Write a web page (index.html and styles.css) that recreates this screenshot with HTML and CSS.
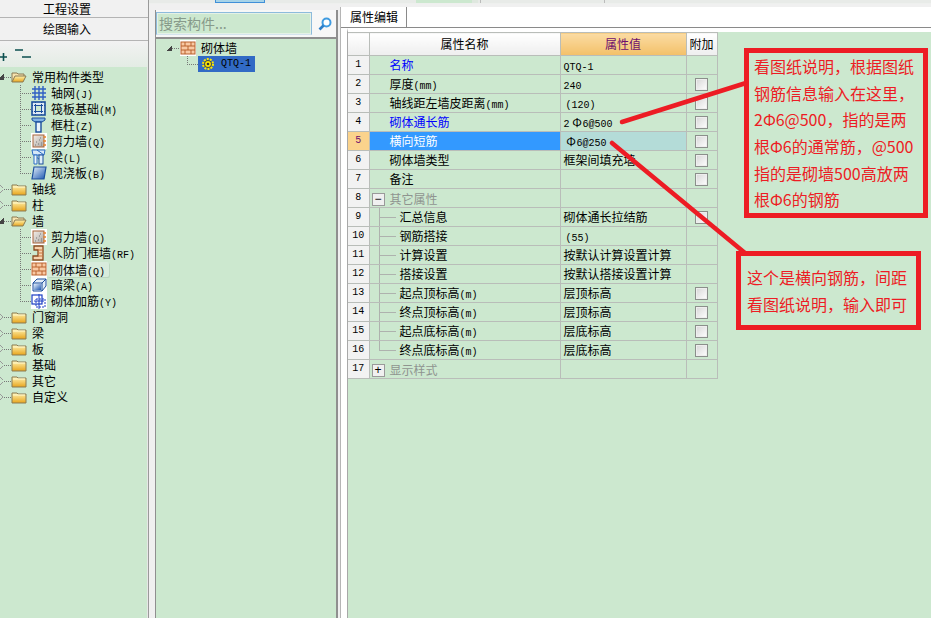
FILE: index.html
```html
<!DOCTYPE html>
<html lang="zh-CN">
<head>
    <meta charset="UTF-8">
    <title>砌体墙 属性编辑</title>
    <link rel="stylesheet" href="styles.css">
</head>
<body>
<svg class="defs" width="0" height="0">
    <defs>
        <linearGradient id="gFold" x1="0" y1="0" x2="0" y2="1"><stop offset="0" stop-color="#fff3b0"/><stop offset="1" stop-color="#e8a41c"/></linearGradient>
        <linearGradient id="gBlue" x1="0" y1="0" x2="1" y2="1"><stop offset="0" stop-color="#e4f0fb"/><stop offset="1" stop-color="#1d56b0"/></linearGradient>
        <linearGradient id="gWall" x1="0" y1="0" x2="1" y2="1"><stop offset="0" stop-color="#f6efe8"/><stop offset="1" stop-color="#a9a6a2"/></linearGradient>
        <symbol id="i-open" viewBox="0 0 16 16">
            <path d="M1 13V4h5l1 1h6v2" fill="#f7e3ae" stroke="#8a7a52"/>
            <path d="M1 13l3-6h11l-3 6z" fill="url(#gFold)" stroke="#8a7a52"/>
        </symbol>
        <symbol id="i-fold" viewBox="0 0 16 16">
            <path d="M1 14V4h5l1 1h8v9z" fill="url(#gFold)" stroke="#8a7a52"/>
            <path d="M2 6h12" stroke="#fff8d0"/>
        </symbol>
        <symbol id="i-grid" viewBox="0 0 16 16">
            <path d="M4 1v14M8 1v14M12 1v14M1 4h14M1 8h14M1 12h14" stroke="#2f5fc4" stroke-width="1.4" fill="none"/>
        </symbol>
        <symbol id="i-raft" viewBox="0 0 16 16">
            <rect x="1" y="1" width="13" height="13" fill="#dfeaf6" stroke="#1c4f9c" stroke-width="1.6"/>
            <rect x="4.500" y="4.500" width="6" height="6" fill="#cce8cf" stroke="#1c4f9c"/>
            <path d="M1 4.500h13M1 10.500h13M4.500 1v13M10.500 1v13" stroke="#1c4f9c" stroke-dasharray="1 1"/>
        </symbol>
        <symbol id="i-col" viewBox="0 0 16 16">
            <path d="M1 1h13v2l-3 2H4L1 3z" fill="#7fb2e4" stroke="#1c4f9c"/>
            <rect x="5" y="5" width="5" height="10" fill="#eaf3fb" stroke="#1c4f9c" stroke-width="1.400"/>
        </symbol>
        <symbol id="i-shear" viewBox="0 0 16 16">
            <rect width="16" height="16" fill="#fff"/>
            <rect x="2" y="2" width="11" height="12" fill="url(#gWall)" stroke="#a8643a"/>
            <path d="M5 9h1M8 7h1M7 11h1M10 10h1M4 12h1M10 12h1M9 5h1" stroke="#777"/>
            <path d="M14 3v2M14 7v2M14 11v2M12 4h3M12 8h3M12 12h3" stroke="#e8842a"/>
        </symbol>
        <symbol id="i-beam" viewBox="0 0 16 16">
            <path d="M1 1h13l-1 5H2z" fill="#d6e8f8" stroke="#2b6cc4"/>
            <path d="M3 6l6 5M6 1l7 5" stroke="#2b6cc4"/>
            <rect x="8" y="6" width="4" height="9" fill="#dfeefa" stroke="#1c4f9c"/>
            <path d="M3 6h3v9H3z" fill="#eef6fc" stroke="#2b6cc4"/>
        </symbol>
        <symbol id="i-slab" viewBox="0 0 16 16">
            <path d="M3 2h12l-2 12H1z" fill="url(#gBlue)" stroke="#1c4f9c" stroke-width="1.200"/>
        </symbol>
        <symbol id="i-door" viewBox="0 0 16 16">
            <rect width="16" height="16" fill="#cce8cf"/>
            <path d="M3 1h9v14H2v-4h5V5H3z" fill="#f6d3ae" stroke="#8a4a20" stroke-width="1.300"/>
            <path d="M7 5h5M7 8h5M7 11h5" stroke="#c9763c"/>
        </symbol>
        <symbol id="i-brick" viewBox="0 0 16 16">
            <rect width="16" height="16" fill="#fff"/>
            <rect x="1" y="2" width="14" height="12" fill="#f9c9a4" stroke="#b9622e"/>
            <path d="M1 6h14M1 10h14M5 2v4M11 2v4M8 6v4M5 10v4M11 10v4" stroke="#b9622e"/>
        </symbol>
        <symbol id="i-dark" viewBox="0 0 16 16">
            <rect width="16" height="16" fill="#fff"/>
            <path d="M2 6l4-4h9v7l-4 5H2z" fill="#e2edf8" stroke="#1c4f9c"/>
            <path d="M2 6h9v8M11 6l4-4" fill="none" stroke="#1c4f9c"/>
            <rect x="3" y="7" width="7" height="6" fill="url(#gBlue)"/>
        </symbol>
        <symbol id="i-rebar" viewBox="0 0 16 16">
            <rect width="16" height="16" fill="#fff"/>
            <rect x="1" y="2" width="10" height="9" fill="none" stroke="#1c3fc4" stroke-width="1.200"/>
            <rect x="5" y="6" width="9" height="8" fill="none" stroke="#1c3fc4" stroke-dasharray="2 1"/>
            <path d="M8 1v15M3 8h10" stroke="#1c3fc4"/>
        </symbol>
        <symbol id="i-gear" viewBox="0 0 12 12">
            <circle cx="6" cy="6" r="5" fill="none" stroke="#ffe800" stroke-width="2" stroke-dasharray="2 1.100"/>
            <circle cx="6" cy="6" r="3.500" fill="#ffe800" stroke="#222" stroke-width=".7"/>
            <circle cx="6" cy="6" r="1.300" fill="#333"/>
        </symbol>
    </defs>
</svg>

<div class="app">
    <aside class="left">
        <div class="nav-btn nav-first">工程设置</div>
        <div class="nav-btn">绘图输入</div>
        <div class="tools">
            <svg width="36" height="26" viewBox="0 0 36 26">
                <path d="M0 16h7M3.500 12v8" stroke="#0b4f4f" stroke-width="1.600"/>
                <path d="M15 9h8M22 16h9" stroke="#0b4f4f" stroke-width="1.600"/>
            </svg>
        </div>
        <div class="tree">
            <div class="row root"><span class="exp open"></span><span class="dots"></span><svg class="ic"><use href="#i-open"/></svg><span class="lb">常用构件类型</span></div>
            <div class="kids">
                <div class="row"><span class="conn"></span><svg class="ic"><use href="#i-grid"/></svg><span class="lb">轴网<i>(J)</i></span></div>
                <div class="row"><span class="conn"></span><svg class="ic"><use href="#i-raft"/></svg><span class="lb">筏板基础<i>(M)</i></span></div>
                <div class="row"><span class="conn"></span><svg class="ic"><use href="#i-col"/></svg><span class="lb">框柱<i>(Z)</i></span></div>
                <div class="row"><span class="conn"></span><svg class="ic"><use href="#i-shear"/></svg><span class="lb">剪力墙<i>(Q)</i></span></div>
                <div class="row"><span class="conn"></span><svg class="ic"><use href="#i-beam"/></svg><span class="lb">梁<i>(L)</i></span></div>
                <div class="row"><span class="conn"></span><svg class="ic"><use href="#i-slab"/></svg><span class="lb">现浇板<i>(B)</i></span></div>
            </div>
            <div class="row root"><span class="exp shut"></span><span class="dots"></span><svg class="ic"><use href="#i-fold"/></svg><span class="lb">轴线</span></div>
            <div class="row root"><span class="exp shut"></span><span class="dots"></span><svg class="ic"><use href="#i-fold"/></svg><span class="lb">柱</span></div>
            <div class="row root"><span class="exp open"></span><span class="dots"></span><svg class="ic"><use href="#i-open"/></svg><span class="lb">墙</span></div>
            <div class="kids">
                <div class="row"><span class="conn"></span><svg class="ic"><use href="#i-shear"/></svg><span class="lb">剪力墙<i>(Q)</i></span></div>
                <div class="row"><span class="conn"></span><svg class="ic"><use href="#i-door"/></svg><span class="lb">人防门框墙<i>(RF)</i></span></div>
                <div class="row"><span class="conn"></span><svg class="ic"><use href="#i-brick"/></svg><span class="lb hover">砌体墙<i>(Q)</i></span></div>
                <div class="row"><span class="conn"></span><svg class="ic"><use href="#i-dark"/></svg><span class="lb">暗梁<i>(A)</i></span></div>
                <div class="row"><span class="conn"></span><svg class="ic"><use href="#i-rebar"/></svg><span class="lb">砌体加筋<i>(Y)</i></span></div>
            </div>
            <div class="row root"><span class="exp shut"></span><span class="dots"></span><svg class="ic"><use href="#i-fold"/></svg><span class="lb">门窗洞</span></div>
            <div class="row root"><span class="exp shut"></span><span class="dots"></span><svg class="ic"><use href="#i-fold"/></svg><span class="lb">梁</span></div>
            <div class="row root"><span class="exp shut"></span><span class="dots"></span><svg class="ic"><use href="#i-fold"/></svg><span class="lb">板</span></div>
            <div class="row root"><span class="exp shut"></span><span class="dots"></span><svg class="ic"><use href="#i-fold"/></svg><span class="lb">基础</span></div>
            <div class="row root"><span class="exp shut"></span><span class="dots"></span><svg class="ic"><use href="#i-fold"/></svg><span class="lb">其它</span></div>
            <div class="row root"><span class="exp shut"></span><span class="dots"></span><svg class="ic"><use href="#i-fold"/></svg><span class="lb">自定义</span></div>
        </div>
    </aside>

    <main class="main">
        <div class="strip">
            <span class="strip-blue"></span>
            <span class="strip-green"></span>
            <span class="strip-tick"></span>
            <span class="strip-tick tick-far"></span>
        </div>
        <div class="panes">
            <section class="mid">
                <div class="search">
                    <div class="search-box">搜索构件...</div>
                    <svg class="search-ic" width="14" height="14" viewBox="0 0 14 14">
                        <circle cx="8.500" cy="5.500" r="4" fill="#fff" stroke="#3f9be0" stroke-width="2"/>
                        <path d="M5.500 8.500L1.500 12.500" stroke="#2f7fc8" stroke-width="2.600"/>
                    </svg>
                </div>
                <div class="mid-tree">
                    <div class="row mid-root"><span class="exp open"></span><span class="dots"></span><svg class="ic"><use href="#i-brick"/></svg><span class="lb">砌体墙</span></div>
                    <div class="row mid-kid">
                        <span class="conn conn-end"></span>
                        <span class="picked"><svg class="gear"><use href="#i-gear"/></svg><i>QTQ-1</i></span>
                    </div>
                </div>
            </section>

            <section class="right">
                <div class="tabs"><div class="tab">属性编辑</div></div>
                <div class="sheet">
                    <table class="props">
                        <colgroup><col class="c-no"><col class="c-name"><col class="c-val"><col class="c-add"></colgroup>
                        <thead>
                            <tr><th class="no"></th><th>属性名称</th><th class="th-val">属性值</th><th>附加</th></tr>
                        </thead>
                        <tbody>
                            <tr><td class="no">1</td><td class="name link">名称</td><td class="val"><i>QTQ-1</i></td><td></td></tr>
                            <tr><td class="no">2</td><td class="name">厚度<i>(mm)</i></td><td class="val"><i>240</i></td><td class="add"><span class="chk"></span></td></tr>
                            <tr><td class="no">3</td><td class="name">轴线距左墙皮距离<i>(mm)</i></td><td class="val"><i class="paren">(120)</i></td><td class="add"><span class="chk"></span></td></tr>
                            <tr><td class="no">4</td><td class="name link">砌体通长筋</td><td class="val"><i>2</i><b>Φ</b><i>6@500</i></td><td class="add"><span class="chk"></span></td></tr>
                            <tr class="cur"><td class="no">5</td><td class="name">横向短筋</td><td class="val"><b>Φ</b><i>6@250</i></td><td class="add"><span class="chk"></span></td></tr>
                            <tr><td class="no">6</td><td class="name">砌体墙类型</td><td class="val">框架间填充墙</td><td class="add"><span class="chk"></span></td></tr>
                            <tr><td class="no">7</td><td class="name">备注</td><td class="val"></td><td class="add"><span class="chk"></span></td></tr>
                            <tr class="group"><td class="no">8</td><td class="name"><span class="box">−</span>其它属性</td><td></td><td></td></tr>
                            <tr><td class="no">9</td><td class="sub">汇总信息</td><td class="val">砌体通长拉结筋</td><td class="add"><span class="chk"></span></td></tr>
                            <tr><td class="no">10</td><td class="sub">钢筋搭接</td><td class="val"><i class="paren">(55)</i></td><td></td></tr>
                            <tr><td class="no">11</td><td class="sub">计算设置</td><td class="val">按默认计算设置计算</td><td></td></tr>
                            <tr><td class="no">12</td><td class="sub">搭接设置</td><td class="val">按默认搭接设置计算</td><td></td></tr>
                            <tr><td class="no">13</td><td class="sub">起点顶标高<i>(m)</i></td><td class="val">层顶标高</td><td class="add"><span class="chk"></span></td></tr>
                            <tr><td class="no">14</td><td class="sub">终点顶标高<i>(m)</i></td><td class="val">层顶标高</td><td class="add"><span class="chk"></span></td></tr>
                            <tr><td class="no">15</td><td class="sub">起点底标高<i>(m)</i></td><td class="val">层底标高</td><td class="add"><span class="chk"></span></td></tr>
                            <tr><td class="no">16</td><td class="sub sub-end">终点底标高<i>(m)</i></td><td class="val">层底标高</td><td class="add"><span class="chk"></span></td></tr>
                            <tr class="group"><td class="no">17</td><td class="name"><span class="box">+</span>显示样式</td><td></td><td></td></tr>
                        </tbody>
                    </table>
                </div>
            </section>
        </div>
    </main>
</div>

<!-- red notes pasted over the screenshot -->
<svg class="arrows" width="931" height="618">
    <path d="M622 122L746 83" stroke="#ed1c24" stroke-width="4.500" stroke-linecap="round"/>
    <path d="M612 143L745 253" stroke="#ed1c24" stroke-width="4.500" stroke-linecap="round"/>
</svg>
<div class="note note-a">看图纸说明，根据图纸<br>钢筋信息输入在这里，<br>2Φ6@500，指的是两<br>根Φ6的通常筋，@500<br>指的是砌墙500高放两<br>根Φ6的钢筋</div>
<div class="note note-b">这个是横向钢筋，间距<br>看图纸说明，输入即可</div>
</body>
</html>
```

FILE: styles.css
```css
*{box-sizing:border-box;}
html,body{margin:0;height:100%;overflow:hidden;}
body{
    position:relative;
    background:#f0f0f0;
    color:#000;
    font:12px/16px "Noto Sans CJK SC",sans-serif;
}
i{font:10px/10px "Liberation Mono",monospace;}
.defs{display:block;height:0;}
.app{display:flex;width:931px;height:618px;}

/* left column */
.left{display:flex;flex-direction:column;width:149px;border-right:1px solid #9a9a9a;}
.nav-btn{
    height:23px;
    padding-right:14px;
    border-bottom:1px solid #b4b4b4;
    background:#f1f1f1;
    text-align:center;
    line-height:22px;
}
.nav-first{height:18px;line-height:17px;}
.tools{height:26px;background:linear-gradient(#f2f2f2,#e3ece4);}
.tools svg{display:block;}
.tree{flex:1;padding-top:2px;background:#cce8cf;border-right:1px solid #e6e6e6;}

.row{display:flex;align-items:center;height:16px;white-space:nowrap;}
.ic{width:16px;height:16px;flex:none;}
.lb{margin-left:5px;}
.kids .lb{margin-left:4px;}
.exp{flex:none;width:4px;height:16px;}
.exp.open{background:linear-gradient(135deg,transparent 50%,#444 50%) -3px 5px/7px 6px no-repeat;}
.exp.shut{background:linear-gradient(45deg,transparent 60%,#999 60%,#999 70%,transparent 70%) -3px 4px/6px 4px no-repeat,linear-gradient(135deg,transparent 60%,#999 60%,#999 70%,transparent 70%) -3px 8px/6px 4px no-repeat;}
.dots{
    flex:none;
    width:7px;
    height:16px;
    background:repeating-linear-gradient(to right,#777 0 1px,transparent 1px 2px) 0 8px/100% 1px no-repeat;
}
.kids{padding-left:20px;}
.conn{
    flex:none;
    width:11px;
    height:16px;
    background:
        repeating-linear-gradient(to right,#777 0 1px,transparent 1px 2px) 0 8px/100% 1px no-repeat,
        repeating-linear-gradient(#777 0 1px,transparent 1px 2px) 0 0/1px 100% no-repeat;
}
.kids .row:last-child .conn,.conn-end{
    background:
        repeating-linear-gradient(to right,#777 0 1px,transparent 1px 2px) 0 8px/100% 1px no-repeat,
        repeating-linear-gradient(#777 0 1px,transparent 1px 2px) 0 0/1px 9px no-repeat;
}
.kids .hover{
    margin-left:0;
    padding:0 4px;
    height:15px;
    background:#d8ecdc;
    border-radius:2px;
    box-shadow:1px 1px 0 #bcd6c0;
}

/* top strip and panes */
.main{flex:1;display:flex;flex-direction:column;min-width:0;}
.strip{
    display:flex;
    flex:none;
    height:4px;
    background:#e8ebe8;
    border-bottom:1px solid #eef0ee;
}
.strip-blue{width:50px;margin-left:66px;background:#a6d3e8;border:1px solid #3f8fd8;border-top:0;}
.strip-green{width:62px;margin-left:151px;background:#cce8cf;border-right:6px solid #dfe8df;}
.strip-tick{width:1px;margin-left:2px;background:#bbb;}
.tick-far{margin-left:123px;}
.panes{flex:1;display:flex;min-height:0;padding-top:3px;}

/* member list */
.mid{
    display:flex;
    flex-direction:column;
    width:183px;
    margin:3px 0 0 6px;
    border-left:1px solid #8f8f8f;
    border-right:2px solid #8f8f8f;
    background:#f7f7f7;
}
.search{display:flex;flex:none;align-items:center;height:27px;}
.search-box{
    width:156px;
    height:23px;
    border:1px solid #8dbbdc;
    border-bottom-color:#d4e4ee;
    background:#cce8cf;
    color:#879a8a;
    font-size:14px;
    line-height:20px;
    padding-left:2px;
    box-shadow:inset 0 0 0 1px #e4f1e6;
}
.search-ic{margin-left:6px;margin-top:1px;}
.mid-tree{flex:1;padding-top:1px;background:#cce8cf;border-top:2px solid #8f8f8f;}
.mid-root{padding-left:10px;}
.mid-root .exp{width:6px;}
.mid-root .exp.open{background-position:0 5px;}
.mid-root .dots{width:8px;}
.mid-kid{padding-left:31px;}
.picked{
    display:flex;
    align-items:center;
    width:57px;
    height:16px;
    background:#316ac5;
}
.picked i{margin-left:7px;}
.gear{width:12px;height:12px;margin-left:4px;flex:none;}

/* property sheet */
.right{flex:1;display:flex;flex-direction:column;margin-left:2px;min-width:0;background:#fff;border-left:1px solid #b5b5b5;}
.tabs{flex:none;height:21px;background:#fff;border-bottom:1px solid #8a8a8a;}
.tab{
    width:66px;
    height:21px;
    padding-left:9px;
    border-right:1px solid #8a8a8a;
    line-height:20px;
}
.sheet{flex:1;margin-left:6px;background:#cce8cf;border-top:4px solid #fff;border-left:1px solid #a8a8a8;}
.props{
    table-layout:fixed;
    width:369px;
    border-collapse:collapse;
    white-space:nowrap;
}
.c-no{width:21px;}
.c-name{width:191px;}
.c-val{width:126px;}
.c-add{width:31px;}
.props th,.props td{padding:0;border:1px solid #b9bdb9;overflow:hidden;}
.props tr>*:first-child{border-left:0;}
.props th{
    height:23px;
    font-weight:400;
    background:linear-gradient(#fff,#eee);
    text-align:center;
}
.props th.th-val{background:linear-gradient(#fbdca4,#f3c068);color:#6e0f6e;}
.props td{height:19px;line-height:16px;}
.props td.no{background:#f2f2f2;text-align:center;}
.props td.no{font:10px/16px "Liberation Mono",monospace;}
.name{padding-left:20px !important;}
.link{color:#00f;}
.val{padding-left:3px !important;}
.val b{
    display:inline-block;
    width:11px;
    margin-left:2px;
    font:400 12px/10px "Noto Sans CJK SC",sans-serif;
    text-align:center;
}
.paren{margin-left:2px;}
.add{text-align:center;}
.chk{
    display:block;
    width:13px;
    height:13px;
    margin:0 auto;
    border:1px solid #8b8f8b;
    background:linear-gradient(135deg,#d6d6d6,#fff);
    box-shadow:inset 0 0 0 1px #eee;
}
.cur td.no{background:#fbd38c;color:#6e0f6e;}
.cur .name{background:#3399ff;color:#fff;}
.cur .val{background:#b4dcd8;}
.group .name{padding:2px 0 0 2px !important;color:#8f948f;}
.box{
    display:inline-block;
    width:13px;
    height:13px;
    margin-right:5px;
    border:1px solid #9a9a9a;
    background:#f0f0f0;
    color:#000;
    font:12px/11px "Liberation Sans",sans-serif;
    text-align:center;
    vertical-align:1px;
}
.sub{
    padding-left:30px !important;
    background:
        linear-gradient(#aeb2ae,#aeb2ae) 9px 0/1px 100% no-repeat,
        linear-gradient(#aeb2ae,#aeb2ae) 9px 9px/17px 1px no-repeat;
}
.sub-end{
    background:
        linear-gradient(#aeb2ae,#aeb2ae) 9px 0/1px 10px no-repeat,
        linear-gradient(#aeb2ae,#aeb2ae) 9px 9px/17px 1px no-repeat;
}

/* annotations */
.arrows{position:absolute;left:0;top:0;pointer-events:none;}
.note{
    position:absolute;
    border:5px solid #ed1c24;
    background:#cce8cf;
    color:#ed1c24;
    font-size:16px;
    line-height:26.67px;
    white-space:nowrap;
}
.note-a{left:744px;top:48px;width:184px;height:170px;padding-left:5px;}
.note-b{left:736px;top:251px;width:185px;height:79px;padding:8px 0 0 6px;}
```
